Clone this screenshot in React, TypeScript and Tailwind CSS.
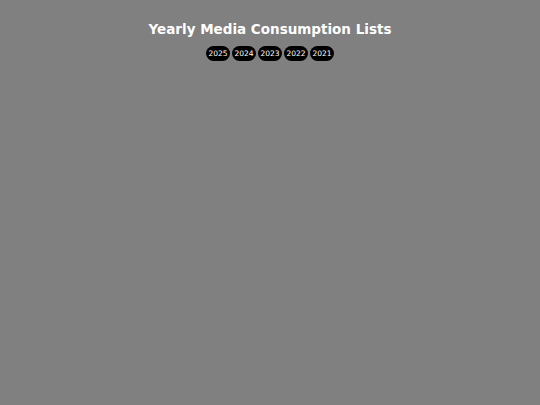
import React from "react";

const years = ["2025", "2024", "2023", "2022", "2021"];

export default function App() {
  return (
    <div
      className="min-h-[405px] w-full bg-[#808080] text-white"
      style={{ fontFamily: '"DejaVu Sans", Verdana, sans-serif' }}
    >
      <div className="flex flex-col items-center pt-[19px]">
        <h1 className="text-[13.5px] font-bold leading-[20px]">Yearly Media Consumption Lists</h1>
        <div className="mt-[7px] flex gap-[2.5px]">
          {years.map((y) => (
            <button
              key={y}
              className="h-[15px] w-[23.5px] rounded-full bg-black text-[7.5px] leading-[15px] text-white"
            >
              {y}
            </button>
          ))}
        </div>
      </div>
    </div>
  );
}
